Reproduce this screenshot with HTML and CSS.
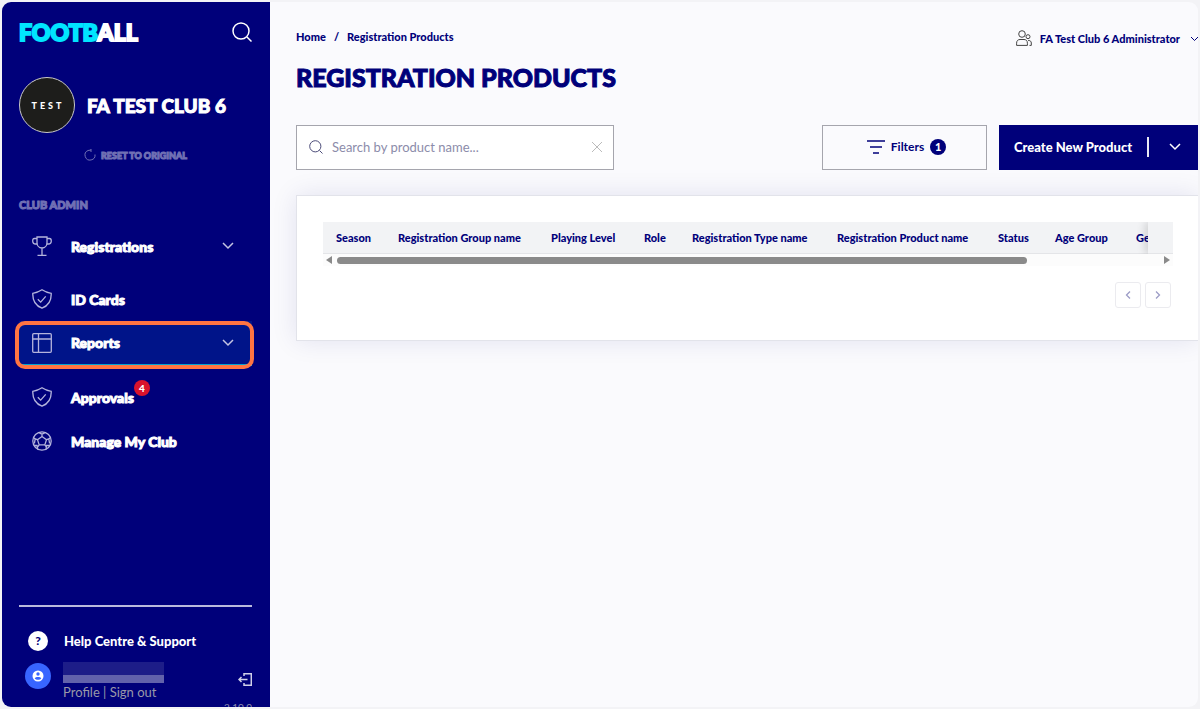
FILE: index.html
```html
<!DOCTYPE html>
<html lang="en">
  <head>
    <meta charset="UTF-8" />
    <meta name="viewport" content="width=device-width, initial-scale=1.0" />
    <title>Registration Products</title>
    <link rel="stylesheet" href="styles.css">
  </head>
  <body>
    <div class="app">
      <aside class="sidebar">
        <div class="brand">
          <a href="#" class="logo"><span>FOOTB</span>ALL</a>
          <button class="icon-btn" aria-label="Search">
            <svg width="20" height="20" viewBox="0 0 20 20"><circle cx="9" cy="9" r="8" /><path d="M15 15l4.500 4.500" /></svg>
          </button>
        </div>

        <div class="club">
          <div class="club-badge">TEST</div>
          <h2>FA TEST CLUB 6</h2>
        </div>
        <button class="reset">
          <svg width="12" height="12" viewBox="0 0 12 12"><path d="M4 1.500A5 5 0 1 0 11 5.500M4 1.500L7 1M7 0v3" /></svg>
          RESET TO ORIGINAL
        </button>

        <h3 class="nav-title">CLUB ADMIN</h3>
        <nav class="nav">
          <a href="#" class="nav-item expandable">
            <svg class="nav-icon" viewBox="0 0 20 20"><path d="M5 1h10v5.500c0 3-2 5.500-5 5.500s-5-2.500-5-5.500zM5 2.500H2.500C1 2.500.7 3.500.7 5c0 2 1.300 3 3 3h1.600M15 2.500h2.500c1.500 0 1.800 1 1.800 2.500 0 2-1.300 3-3 3h-1.600M10 12v7M5.500 19.300h9" /></svg>
            <span>Registrations</span>
            <svg class="chevron" viewBox="0 0 12 8"><path d="M1 1l5 5 5-5" /></svg>
          </a>
          <a href="#" class="nav-item">
            <svg class="nav-icon" viewBox="0 0 20 20"><path d="M10 .8c3 2 5.500 3 9.200 3.500C19.500 11 17 16.500 10 19.200 3 16.500.5 11 .8 4.300 4.500 3.800 7 2.800 10 .8zM5.800 10.200l2.900 2.900 5-5.800" /></svg>
            <span>ID Cards</span>
          </a>
          <a href="#" class="nav-item active expandable">
            <svg class="nav-icon" viewBox="0 0 20 20"><rect x=".7" y=".7" width="18.600" height="18.600" rx="1" /><path d="M6.500 1v18M1 6h18" /></svg>
            <span>Reports</span>
            <svg class="chevron" viewBox="0 0 12 8"><path d="M1 1l5 5 5-5" /></svg>
          </a>
          <a href="#" class="nav-item">
            <svg class="nav-icon" viewBox="0 0 20 20"><path d="M10 .8c3 2 5.500 3 9.200 3.500C19.500 11 17 16.500 10 19.200 3 16.500.5 11 .8 4.300 4.500 3.800 7 2.800 10 .8zM5.800 10.200l2.900 2.900 5-5.800" /></svg>
            <span>Approvals<b class="count">4</b></span>
          </a>
          <a href="#" class="nav-item">
            <svg class="nav-icon" viewBox="0 0 20 20"><circle cx="10" cy="10" r="9.200" /><path d="M10 5.500l4.500 3.200-1.700 5.200H7.200L5.500 8.700zM10 5.500V3.200M14.500 8.700l2.300-.8M12.800 13.900l1.500 2M7.200 13.900l-1.500 2M5.500 8.700l-2.300-.8M6.500 1.500L10 3.200l3.500-1.700M18.500 6.500l-1.700 1.400.8 4.600M2 14.500h3l.8 4M18 14.500h-3.500l-.5 4M1.500 6.500l1.700 1.400-.8 4.600" /></svg>
            <span>Manage My Club</span>
          </a>
        </nav>

        <div class="sidebar-footer">
          <a href="#" class="help"><i>?</i>Help Centre &amp; Support</a>
          <div class="user">
            <svg class="avatar" viewBox="0 0 26 26"><circle cx="13" cy="13" r="13" fill="#3865ff" /><circle cx="13" cy="13" r="5.500" fill="#fff" /><circle cx="13" cy="11" r="1.700" fill="#3865ff" /><path d="M9.700 15.200c1-1.700 5.600-1.700 6.600 0-1.300 2.200-5.300 2.200-6.600 0z" fill="#3865ff" /></svg>
            <div>
              <div class="user-name"></div>
              <div class="user-links"><a href="#">Profile</a> | <a href="#">Sign out</a></div>
            </div>
            <button class="icon-btn sign-out" aria-label="Sign out">
              <svg width="14" height="13" viewBox="0 0 14 13"><path d="M6 3V.7h7.300v11.600H6V10M9.500 6.500H1M3.500 4L1 6.500 3.500 9" /></svg>
            </button>
          </div>
          <div class="version">2.10.0</div>
        </div>
      </aside>

      <main class="main">
        <header class="topbar">
          <div class="breadcrumb"><a href="#">Home</a><span>/</span><a href="#">Registration Products</a></div>
          <button class="account">
            <svg width="16" height="16" viewBox="0 0 16 16"><circle cx="6" cy="4" r="3.300" /><path d="M.6 15.400v-2.200c0-2.600 1.500-3.700 3.400-3.700h4c2 0 3.400 1.100 3.400 3.700v2.200z" /><circle cx="12" cy="6.700" r="2" /><path d="M12 10.500h.8c1.500 0 2.500 1 2.500 2.500v2.400h-1.800" /></svg>
            FA Test Club 6 Administrator
            <svg class="account-chevron" width="9" height="6" viewBox="0 0 9 6"><path d="M1 1l3.500 3.500L8 1" /></svg>
          </button>
        </header>
        <h1>REGISTRATION PRODUCTS</h1>

        <div class="toolbar">
          <div class="search">
            <svg width="14" height="14" viewBox="0 0 14 14"><circle cx="6.300" cy="6.300" r="5.600" /><path d="M10.500 10.500l3 3" /></svg>
            <input type="text" placeholder="Search by product name..." aria-label="Search by product name" />
            <button class="clear" aria-label="Clear search">
              <svg width="12" height="12" viewBox="0 0 12 12"><path d="M1 1l10 10M11 1L1 11" /></svg>
            </button>
          </div>
          <button class="filters">
            <svg width="18" height="14" viewBox="0 0 18 14"><path d="M0 1h18M3 7h12M6 13h6" /></svg>
            Filters
            <b>1</b>
          </button>
          <div class="create">
            <button class="create-main">Create New Product</button>
            <button class="create-more" aria-label="More options">
              <svg width="12" height="8" viewBox="0 0 12 8"><path d="M1 1l5 5 5-5" /></svg>
            </button>
          </div>
        </div>

        <section class="card">
          <div class="table-wrap">
            <table>
              <colgroup>
                <col class="w-season"><col class="w-group"><col class="w-level"><col class="w-role"><col class="w-type">
                <col class="w-product"><col class="w-status"><col class="w-age"><col class="w-gender"><col class="w-actions">
              </colgroup>
              <thead>
                <tr>
                  <th>Season</th>
                  <th>Registration Group name</th>
                  <th>Playing Level</th>
                  <th>Role</th>
                  <th>Registration Type name</th>
                  <th>Registration Product name</th>
                  <th>Status</th>
                  <th>Age Group</th>
                  <th>Gender</th>
                  <th class="sticky"></th>
                </tr>
              </thead>
            </table>
          </div>
          <div class="scrollbar">
            <span class="arrow-left"></span>
            <div class="track"><div class="thumb"></div></div>
            <span class="arrow-right"></span>
          </div>
          <div class="pager">
            <button aria-label="Previous page"><svg width="6" height="8" viewBox="0 0 6 8"><path d="M5 .5L1.500 4 5 7.500" /></svg></button>
            <button aria-label="Next page"><svg width="6" height="8" viewBox="0 0 6 8"><path d="M1 .5L4.500 4 1 7.500" /></svg></button>
          </div>
        </section>
      </main>
    </div>
  </body>
</html>
```

FILE: styles.css
```css
* {
  box-sizing: border-box;
}

body {
  margin: 0;
  padding: 2px;
  background-color: #f3f3f6;
  color: #00007a;
  font-family: "Lato", sans-serif;
  font-size: 12px;
}

a {
  color: inherit;
  text-decoration: none;
}

button {
  padding: 0;
  border: none;
  background: none;
  color: inherit;
  font: inherit;
  cursor: pointer;
}

svg {
  display: block;
  flex: none;
  fill: none;
  stroke: currentColor;
}

.app {
  display: flex;
  height: calc(100vh - 4px);
  border-radius: 9px;
  background-color: #fafafd;
  overflow: hidden;
}

/* sidebar */
.sidebar {
  display: flex;
  flex-direction: column;
  flex: none;
  width: 268px;
  padding: 17px 18px 0 17px;
  background-color: #00007a;
  color: #fff;
}

.brand {
  display: flex;
  justify-content: space-between;
  align-items: center;
  height: 26px;
}

.logo {
  font-size: 23px;
  font-weight: 900;
  line-height: 26px;
}

.logo span {
  color: #00e5ff;
}

/* extra heavy headings */
.logo,
.club h2,
h1 {
  -webkit-text-stroke: 2px;
}

.nav-item span,
.nav-title {
  -webkit-text-stroke: 1px;
}

.brand svg {
  stroke-width: 1.5;
}

.club {
  display: flex;
  align-items: center;
  gap: 12px;
  margin-top: 32px;
}

.club-badge {
  display: flex;
  align-items: center;
  justify-content: center;
  width: 56px;
  height: 56px;
  padding-left: 2px;
  border: 1px solid #c8c8c8;
  border-radius: 50%;
  background-color: #1d1d1b;
  font-size: 9px;
  font-weight: 900;
  letter-spacing: 3px;
}

.club h2 {
  margin: 0;
  font-size: 19px;
  font-weight: 900;
}

.club h2 {
  -webkit-text-stroke: 1px;
}

.reset {
  display: flex;
  align-items: center;
  justify-content: center;
  gap: 5px;
  height: 32px;
  margin-top: 6px;
  color: #7070b4;
  font-size: 9px;
  font-weight: 900;
  -webkit-text-stroke: 1px;
}

.nav-title {
  margin: 27px 0 0;
  color: #7070b4;
  font-size: 11px;
  font-weight: 900;
  line-height: 14px;
}

.nav {
  margin-top: 12px;
}

.nav-item {
  position: relative;
  display: flex;
  align-items: center;
  height: 44px;
  padding: 0 18px 0 13px;
  font-size: 14px;
  font-weight: 900;
}

.nav-item.expandable {
  margin-bottom: 9px;
}

.nav-item span {
  position: relative;
  margin-left: 19px;
}

.nav-icon {
  width: 20px;
  height: 20px;
  color: #b4b4dc;
  stroke-width: 1.3;
}

.chevron {
  width: 12px;
  height: 8px;
  margin-left: auto;
  color: #c4c4e2;
  stroke-width: 1.5;
}

.nav-item.active {
  height: 45px;
  background-color: #001489;
  border-bottom: 2px solid #00a3d0;
}

.nav-item.active::after {
  content: "";
  position: absolute;
  inset: 0 -2px -5px -4px;
  border: 4px solid #ff7442;
  border-radius: 10px;
}

.count {
  position: absolute;
  left: 100%;
  bottom: 10px;
  width: 16px;
  height: 16px;
  border-radius: 50%;
  background-color: #d9132c;
  font-size: 10px;
  line-height: 16px;
  text-align: center;
  -webkit-text-stroke: 0;
}

.sidebar-footer {
  margin-top: auto;
  border-top: 2px solid #b9b9dc;
}

.help {
  display: flex;
  align-items: center;
  gap: 16px;
  margin-top: 24px;
  padding-left: 9px;
  font-size: 13px;
  font-weight: 900;
}

.help i {
  width: 20px;
  height: 20px;
  border-radius: 50%;
  background-color: #fff;
  color: #00007a;
  font-size: 12px;
  font-style: normal;
  line-height: 20px;
  text-align: center;
}

.user {
  display: flex;
  gap: 12px;
  margin-top: 12px;
  padding-left: 6px;
}

.avatar {
  width: 26px;
  height: 26px;
  stroke: none;
}

.user-name {
  width: 101px;
  height: 21px;
  margin-top: -1px;
  background: linear-gradient(#1d1d88 13px, #6262ab 13px);
}

.user-links {
  color: #9999a8;
  font-size: 13px;
  line-height: 18px;
}

.sign-out {
  margin: 10px 0 0 auto;
  align-self: flex-start;
  color: #d0d0e8;
}

.sign-out svg {
  stroke-width: 1.5;
}

.version {
  height: 6px;
  color: #8c8cae;
  font-size: 10px;
  line-height: 12px;
  text-align: right;
  overflow: hidden;
}

/* content */
.main {
  flex: 1;
  min-width: 0;
  padding: 24px 0 0 26px;
}

.topbar {
  display: flex;
  align-items: flex-start;
  justify-content: space-between;
  height: 22px;
  font-size: 11px;
  font-weight: 900;
}

.breadcrumb {
  line-height: 22px;
}

.breadcrumb span {
  margin: 0 8px;
}

.account {
  display: flex;
  align-items: center;
  gap: 8px;
  height: 24px;
  font-weight: 900;
}

.account svg:first-child {
  color: #444;
}

.account-chevron {
  margin: 2px -1px 0 2px;
}

h1 {
  margin: 14px 0 0;
  font-size: 25px;
  font-weight: 900;
  line-height: 30px;
}

h1 {
  -webkit-text-stroke: 1px;
}

.toolbar {
  display: flex;
  height: 45px;
  margin-top: 33px;
}

.search {
  display: flex;
  align-items: center;
  width: 318px;
  margin-right: auto;
  padding: 0 10px 1px 12px;
  border: 1px solid #a5a5ad;
  background-color: #fff;
}

.search svg {
  color: #4b4b78;
}

.search input {
  flex: 1;
  min-width: 0;
  margin-left: 9px;
  padding: 0;
  border: none;
  outline: none;
  font-family: inherit;
  font-size: 13px;
}

.search input::placeholder {
  color: #8c8caa;
}

.search .clear svg {
  color: #bbb;
}

.filters {
  display: flex;
  align-items: center;
  justify-content: center;
  gap: 6px;
  width: 165px;
  margin-right: 12px;
  padding: 0 0 2px 4px;
  border: 1px solid #a5a5ad;
  font-size: 12px;
  font-weight: 700;
}

.filters svg {
  stroke-width: 1.5;
}

.filters b {
  width: 16px;
  height: 16px;
  border-radius: 50%;
  background-color: #00007a;
  color: #fff;
  font-size: 11px;
  line-height: 16px;
}

.create {
  display: flex;
  align-items: center;
  width: 199px;
  padding-bottom: 1px;
  background-color: #00007a;
  color: #fff;
}

.create-main {
  width: 149px;
  height: 20px;
  padding-left: 15px;
  font-size: 13px;
  font-weight: 900;
  text-align: left;
}

.create-more {
  height: 20px;
  padding: 0 17px 0 20px;
  border-left: 2px solid #e8e8f4;
}

.create-more svg {
  stroke-width: 1.5;
}

.card {
  height: 146px;
  margin-top: 25px;
  padding: 26px 25px 0 26px;
  border: 1px solid #e2e3ea;
  border-right: none;
  background-color: #fff;
  box-shadow: 0 0 24px rgba(0, 0, 122, 0.1);
}

.table-wrap {
  overflow: hidden;
}

table {
  width: 910px;
  table-layout: fixed;
  border-collapse: separate;
  border-spacing: 0;
}

th {
  height: 32px;
  padding: 0 0 1px 13px;
  border-bottom: 1px solid #e4e5e8;
  background-color: #f2f3f5;
  font-size: 11px;
  font-weight: 900;
  text-align: left;
  white-space: nowrap;
}

.w-season { width: 62px; }
.w-group { width: 153px; }
.w-level { width: 93px; }
.w-role { width: 48px; }
.w-type { width: 145px; }
.w-product { width: 161px; }
.w-status { width: 57px; }
.w-age { width: 81px; }
.w-gender { width: 85px; }
.w-actions { width: 25px; }

.sticky {
  position: sticky;
  right: 0;
  padding: 0;
  box-shadow: -3px 0 8px rgba(0, 0, 0, 0.14);
}

.scrollbar {
  display: flex;
  align-items: center;
  gap: 5px;
  height: 12px;
  padding: 0 3px;
  background-color: #fcfcfc;
}

.arrow-left,
.arrow-right {
  border: 4px solid transparent;
}

.arrow-left {
  border-left: none;
  border-right: 6px solid #8a8a8a;
}

.arrow-right {
  border-right: none;
  border-left: 6px solid #8a8a8a;
}

.track {
  flex: 1;
}

.thumb {
  width: 84%;
  height: 7px;
  border-radius: 4px;
  background-color: #8a8a8a;
}

.pager {
  display: flex;
  justify-content: flex-end;
  gap: 4px;
  margin: 16px 2px 0 0;
}

.pager button {
  display: flex;
  align-items: center;
  justify-content: center;
  width: 26px;
  height: 26px;
  border: 1px solid #ebebef;
  border-radius: 3px;
  color: #9c9cc6;
  stroke-width: 1.3;
}
```
